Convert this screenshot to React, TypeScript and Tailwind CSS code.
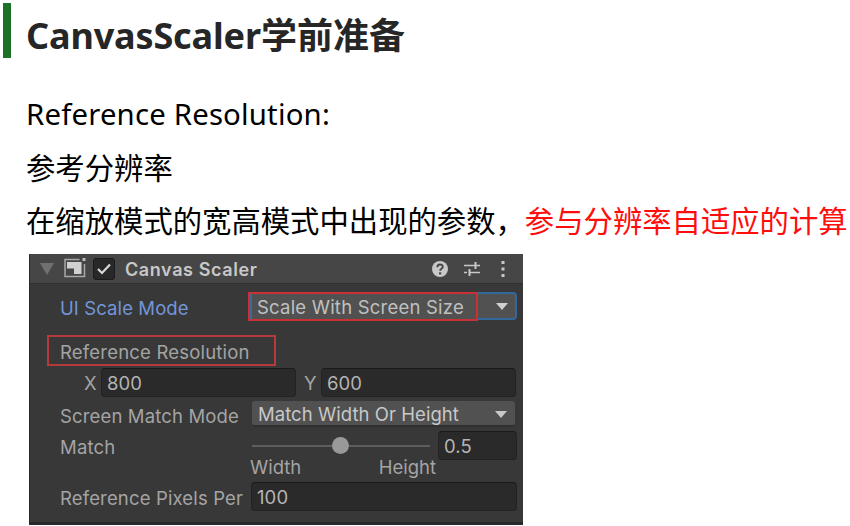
import type { ReactNode } from 'react';

function Arrow({ className }: { className: string }) {
  return (
    <svg viewBox="0 0 12 7" preserveAspectRatio="none" className={className} fill="currentColor">
      <path d="M0 0h12L6 7z" />
    </svg>
  );
}

function Field({ className, children }: { className: string; children: ReactNode }) {
  return (
    <div className={`flex items-center rounded-[4px] border border-[#232323] border-t-[#1a1a1a] bg-[#2a2a2a] pl-[5px] pt-[2px] text-[#b4b4b4] ${className}`}>
      {children}
    </div>
  );
}

function Header() {
  return (
    <div className="flex h-[30px] shrink-0 items-center border-b border-[#303030] bg-[#464646] text-[#c8c8c8]">
      <Arrow className="ml-[10px] mt-px h-[12px] w-[14px] text-[#707070]" />
      <svg viewBox="0 0 24 22" className="-mt-px ml-[9px] h-[22px] w-[24px]">
        <path d="M16.5 2.500H2v17h19.500V7" fill="none" stroke="#a8a8a8" strokeWidth="1.500" />
        <path d="M4 5h14.500v12h-7.500v-5.500h-7z" fill="#d0d0d0" />
        <path d="M19.500 1h3v3h-3z" fill="#bdbdbd" />
      </svg>
      <div className="ml-[6px] flex h-[22px] w-[22px] items-center justify-center rounded-[3px] border border-[#1b1b1b] bg-[#282828]">
        <svg viewBox="0 0 14 12" className="h-[12px] w-[14px]" fill="none" stroke="#d8d8d8" strokeWidth="2.200">
          <path d="M1 6l4 4L13 1.500" />
        </svg>
      </div>
      <span className="ml-[10px] pt-[2px] text-[18px] font-semibold tracking-[0.6px]">Canvas Scaler</span>
      <div className="ml-auto mr-[18px] flex items-center">
        <svg viewBox="0 0 16 16" className="h-[16px] w-[16px]">
          <circle cx="8" cy="8" r="8" fill="#c8c8c8" />
          <path d="M5.300 6.300c0-3.800 5.500-3.600 5.500-.5 0 2-2.700 1.900-2.700 4" fill="none" stroke="#464646" strokeWidth="1.900" />
          <path d="M7 11.300h2.200v2.100H7z" fill="#464646" />
        </svg>
        <svg viewBox="0 0 16 16" className="ml-[16px] h-[16px] w-[16px]" fill="none" stroke="#c8c8c8">
          <path d="M0 4.500h11M12 4.500h4M0 11.500h3M5 11.500h11" strokeWidth="1.700" />
          <path d="M11.500 1v7M5.500 8v7" strokeWidth="2" />
        </svg>
        <svg viewBox="0 0 4 16" className="ml-[21px] h-[16px] w-[4px]" fill="#c8c8c8">
          <path d="M.5 0h3v3h-3zM.5 6.500h3v3h-3zM.5 13h3v3h-3z" />
        </svg>
      </div>
    </div>
  );
}

function Inspector() {
  return (
    <div className="ml-[29px] flex h-[271px] w-[494px] flex-col border-b-[3px] border-l border-[#282828] bg-[#383838] font-['Inter','Liberation_Sans',sans-serif] text-[18.500px] leading-none text-[#a4a4a4]">
      <Header />
      <div className="mt-[7px] flex h-[30px] shrink-0 items-center pl-[30px]">
        <span className="w-[188px] pt-[4px] tracking-[0.1px] text-[#7396d8]">UI Scale Mode</span>
        <div className="flex h-[29px] w-[230px] items-center border-2 border-[#c83237] bg-[#515151] text-[#c0c0c0]">
          <span className="flex h-[25px] items-center whitespace-nowrap border-l-2 border-[#39699e] pl-[5px] pt-[2px] tracking-[0.210px]">Scale With Screen Size</span>
        </div>
        <div className="flex h-[28px] w-[39px] items-center rounded-r-[4px] border-2 border-l-0 border-[#34689c] bg-[#515151] pl-[18px] text-[#d0d0d0]">
          <Arrow className="h-[7px] w-[12px]" />
        </div>
      </div>
      <div className="ml-[17px] mt-[14px] flex h-[31px] w-[229px] shrink-0 items-center border-2 border-[#b43a3c] pl-[11px] pt-[4px]">
        <span className="tracking-[0.2px]">Reference Resolution</span>
      </div>
      <div className="mt-[2px] flex h-[29px] shrink-0 items-center pl-[54px]">
        <span className="w-[17px] pt-[2px]">X</span>
        <Field className="h-[29px] w-[195px]"><span className="tracking-[0.1px]">800</span></Field>
        <span className="ml-[8px] w-[17px] pt-[2px]">Y</span>
        <Field className="h-[29px] w-[195px]"><span className="tracking-[0.1px]">600</span></Field>
      </div>
      <div className="mt-[4px] flex h-[26px] shrink-0 items-center pl-[30px]">
        <span className="w-[192px] whitespace-nowrap pt-[4px] tracking-[0.150px]">Screen Match Mode</span>
        <div className="flex h-[26px] w-[263px] items-center justify-between rounded-[3px] border-b-2 border-[#303030] bg-[#515151] pl-[6px] pr-[8px] text-[#c8c8c8]">
          <span className="pt-[3px] tracking-[0.050px]">Match Width Or Height</span>
          <Arrow className="mt-[2px] h-[7px] w-[12px]" />
        </div>
      </div>
      <div className="mt-[4px] flex h-[50px] shrink-0 pl-[30px]">
        <span className="w-[190px] pt-[7px] tracking-[0.2px]">Match</span>
        <div className="flex w-[188px] flex-col">
          <div className="ml-[2px] flex h-[29px] w-[178px] items-center">
            <div className="h-[2px] w-[80px] bg-[#5e5e5e]" />
            <div className="h-[17px] w-[17px] rounded-full bg-[#999999]" />
            <div className="h-[2px] flex-1 bg-[#5e5e5e]" />
          </div>
          <div className="-mt-[2px] flex justify-between pr-[2px]">
            <span>Width</span>
            <span>Height</span>
          </div>
        </div>
        <Field className="h-[29px] w-[79px]"><span className="tracking-[0.1px]">0.5</span></Field>
      </div>
      <div className="mt-px flex h-[29px] shrink-0 items-center pl-[30px]">
        <span className="w-[191px] whitespace-nowrap pt-[3px] tracking-[0.150px]">Reference Pixels Per</span>
        <Field className="h-[29px] w-[266px]"><span className="tracking-[0.1px]">100</span></Field>
      </div>
    </div>
  );
}

export default function App() {
  return (
    <div className="flex h-[526px] w-[850px] flex-col overflow-hidden bg-white font-['Noto_Sans','Noto_Sans_CJK_SC',sans-serif] text-black">
      <div className="flex h-[76px] shrink-0 items-start pl-[3px] pt-[3px]">
        <div className="h-[55px] w-[8px] bg-[#1e7128]" />
        <h1 className="ml-[15px] whitespace-nowrap pt-[6px] text-[36px] font-bold leading-[54px] tracking-[-0.140px] text-[#262626]">
          CanvasScaler<span className="tracking-normal">学前准备</span>
        </h1>
      </div>
      <div className="flex h-[178px] shrink-0 flex-col whitespace-nowrap pl-[26px] pt-[12px] text-[29.350px] leading-[53.500px]">
        <p className="tracking-[0.180px]">Reference Resolution:</p>
        <p>参考分辨率</p>
        <p>在缩放模式的宽高模式中出现的参数，<span className="text-[#ff0d0d]">参与分辨率自适应的计算</span></p>
      </div>
      <Inspector />
    </div>
  );
}
